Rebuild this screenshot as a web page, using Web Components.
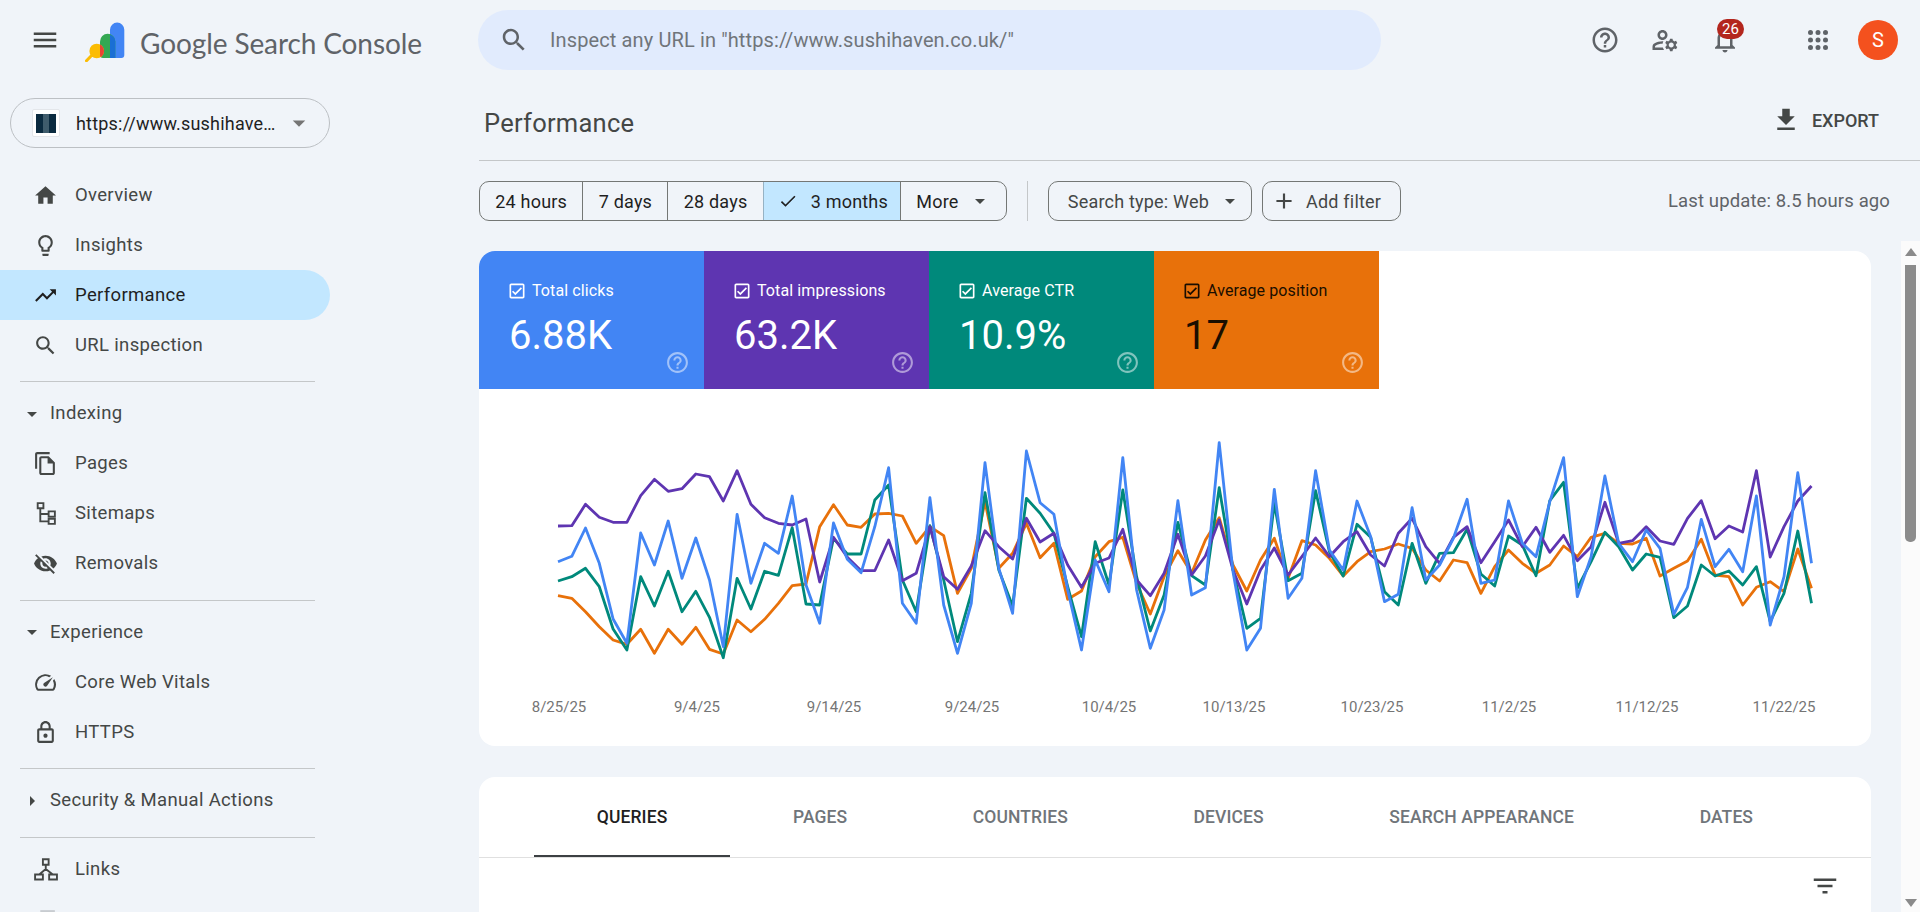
<!DOCTYPE html>
<html lang="en"><head><meta charset="utf-8"><title>Performance</title>
<style>
html,body{margin:0;padding:0;height:912px;overflow:hidden;background:#f0f4f9;font-family:Roboto,"Liberation Sans",sans-serif;}
</style></head>
<body>
<gsc-app></gsc-app>
<script>
const P={
menu:'M3 18h18v-2H3v2zm0-5h18v-2H3v2zm0-7v2h18V6H3z',
home:'M10 20v-6h4v6h5v-8h3L12 3 2 12h3v8z',
bulb:'M9 21c0 .55.45 1 1 1h4c.55 0 1-.45 1-1v-1H9v1zm3-19C8.14 2 5 5.14 5 9c0 2.38 1.19 4.47 3 5.74V17c0 .55.45 1 1 1h6c.55 0 1-.45 1-1v-2.26c1.81-1.27 3-3.36 3-5.74 0-3.86-3.14-7-7-7zm2.85 11.1l-.85.6V16h-4v-2.3l-.85-.6C7.8 12.16 7 10.63 7 9c0-2.76 2.24-5 5-5s5 2.24 5 5c0 1.63-.8 3.16-2.15 4.1z',
trend:'M16 6l2.29 2.29-4.88 4.88-4-4L2 16.59 3.41 18l6-6 4 4 6.3-6.29L22 12V6z',
search:'M15.5 14h-.79l-.28-.27C15.41 12.59 16 11.11 16 9.5 16 5.91 13.09 3 9.5 3S3 5.91 3 9.5 5.91 16 9.5 16c1.61 0 3.09-.59 4.23-1.57l.27.28v.79l5 4.99L20.49 19l-4.99-5zm-6 0C7.01 14 5 11.99 5 9.5S7.01 5 9.5 5 14 7.01 14 9.5 11.99 14 9.5 14z',
pages:'M16 1H4c-1.1 0-2 .9-2 2v14h2V3h12V1zm-1 4H8c-1.1 0-1.99.9-1.99 2L6 21c0 1.1.89 2 1.99 2H19c1.1 0 2-.9 2-2V11l-6-6zM8 21V7h6v5h5v9H8z',
eyeoff:'M12 7c2.76 0 5 2.24 5 5 0 .65-.13 1.26-.36 1.83l2.92 2.92c1.51-1.26 2.7-2.89 3.43-4.75-1.73-4.39-6-7.5-11-7.5-1.4 0-2.74.25-3.98.7l2.16 2.16C10.74 7.13 11.35 7 12 7zM2 4.27l2.28 2.28.46.46C3.08 8.3 1.78 10.02 1 12c1.73 4.39 6 7.5 11 7.5 1.55 0 3.03-.3 4.38-.84l.42.42L19.73 22 21 20.73 3.27 3 2 4.27zM7.53 9.8l1.55 1.55c-.05.21-.08.43-.08.65 0 1.66 1.34 3 3 3 .22 0 .44-.03.65-.08l1.55 1.55c-.67.33-1.41.53-2.2.53-2.76 0-5-2.24-5-5 0-.79.2-1.53.53-2.2zm4.31-.78l3.15 3.15.02-.16c0-1.66-1.34-3-3-3l-.17.01z',
speed:'M20.38 8.57l-1.23 1.85a8 8 0 0 1-.22 7.58H5.07A8 8 0 0 1 15.58 6.85l1.85-1.23A10 10 0 0 0 3.35 19a2 2 0 0 0 1.72 1h13.85a2 2 0 0 0 1.74-1 10 10 0 0 0-.27-10.44zm-9.79 6.84a2 2 0 0 0 2.83 0l5.66-8.49-8.49 5.66a2 2 0 0 0 0 2.83z',
lock:'M18 8h-1V6c0-2.76-2.24-5-5-5S7 3.24 7 6v2H6c-1.1 0-2 .9-2 2v10c0 1.1.9 2 2 2h12c1.1 0 2-.9 2-2V10c0-1.1-.9-2-2-2zM9 6c0-1.66 1.34-3 3-3s3 1.34 3 3v2H9V6zm9 14H6V10h12v10zm-6-3c1.1 0 2-.9 2-2s-.9-2-2-2-2 .9-2 2 .9 2 2 2z',
help:'M11 18h2v-2h-2v2zm1-16C6.48 2 2 6.48 2 12s4.48 10 10 10 10-4.48 10-10S17.52 2 12 2zm0 18c-4.41 0-8-3.59-8-8s3.59-8 8-8 8 3.59 8 8-3.59 8-8 8zm0-14c-2.21 0-4 1.79-4 4h2c0-1.1.9-2 2-2s2 .9 2 2c0 2-3 1.75-3 5h2c0-2.25 3-2.5 3-5 0-2.21-1.79-4-4-4z',
admin:'M4 18v-.65c0-.34.16-.66.41-.81C6.1 15.53 8.03 15 10 15c.03 0 .05 0 .08.01.1-.7.3-1.37.59-1.98-.22-.02-.44-.03-.67-.03-2.42 0-4.68.67-6.61 1.82-.88.52-1.39 1.5-1.39 2.53V20h9.26c-.42-.6-.75-1.28-.97-2H4zM10 12c2.21 0 4-1.79 4-4s-1.79-4-4-4-4 1.79-4 4 1.79 4 4 4zm0-6c1.1 0 2 .9 2 2s-.9 2-2 2-2-.9-2-2 .9-2 2-2zM20.75 16c0-.22-.03-.42-.06-.63l1.14-1.01-1-1.73-1.45.49c-.32-.27-.68-.48-1.08-.63L18 11h-2l-.3 1.49c-.4.15-.76.36-1.08.63l-1.45-.49-1 1.73 1.14 1.01c-.03.21-.06.41-.06.63s.03.42.06.63l-1.14 1.01 1 1.73 1.45-.49c.32.27.68.48 1.08.63L16 21h2l.3-1.49c.4-.15.76-.36 1.08-.63l1.45.49 1-1.73-1.14-1.01c.03-.21.06-.41.06-.63zM17 18c-1.1 0-2-.9-2-2s.9-2 2-2 2 .9 2 2-.9 2-2 2z',
bell:'M12 22c1.1 0 2-.9 2-2h-4c0 1.1.9 2 2 2zm6-6v-5c0-3.07-1.63-5.64-4.5-6.32V4c0-.83-.67-1.5-1.5-1.5s-1.5.67-1.5 1.5v.68C7.64 5.36 6 7.92 6 11v5l-2 2v1h16v-1l-2-2zm-2 1H8v-6c0-2.48 1.51-4.5 4-4.5s4 2.02 4 4.5v6z',
download:'M19 9h-4V3H9v6H5l7 7 7-7zM5 18v2h14v-2H5z',
check:'M9 16.17L4.83 12l-1.42 1.41L9 19 21 7l-1.41-1.41z',
drop:'M7 10l5 5 5-5z',
right:'M10 17l5-5-5-5z',
add:'M19 13h-6v6h-2v-6H5v-2h6V5h2v6h6v2z',
filter:'M10 18h4v-2h-4v2zM3 6v2h18V6H3zm3 7h12v-2H6v2z',
checkbox:'M19 3H5c-1.1 0-2 .9-2 2v14c0 1.1.9 2 2 2h14c1.1 0 2-.9 2-2V5c0-1.1-.9-2-2-2zm0 16H5V5h14v14zM17.99 9l-1.41-1.42-6.59 6.59-2.58-2.57-1.42 1.41 4 3.99z',
apps:'M6 4a2 2 0 1 0 0 4 2 2 0 0 0 0-4zm6 0a2 2 0 1 0 0 4 2 2 0 0 0 0-4zm6 0a2 2 0 1 0 0 4 2 2 0 0 0 0-4zM6 10a2 2 0 1 0 0 4 2 2 0 0 0 0-4zm6 0a2 2 0 1 0 0 4 2 2 0 0 0 0-4zm6 0a2 2 0 1 0 0 4 2 2 0 0 0 0-4zM6 16a2 2 0 1 0 0 4 2 2 0 0 0 0-4zm6 0a2 2 0 1 0 0 4 2 2 0 0 0 0-4zm6 0a2 2 0 1 0 0 4 2 2 0 0 0 0-4z',
trophy:'M7 3h14v8h-14z'
};
const STROKE={
sitemap:'M4.500 2h5.500v5h-5.500zM7 7v12.500h8M7 12.500h8M15 10h6v5h-6zM15 17h6v5h-6z',
links:'M9.500 2.200h5.500v5.200H9.500zM2 16.800h7.500v4.800H2zM15.500 16.800H23v4.800h-7.500zM12.250 7.400v4.100M12.250 11.500L6 16.800M12.250 11.500L19 16.800'
};
function def(name,css,html,extra){
  customElements.define(name,class extends HTMLElement{
    connectedCallback(){
      if(this.shadowRoot)return;
      const s=this.attachShadow({mode:'open'});
      s.innerHTML='<style>'+css+'</style>'+(typeof html==='function'?html(this):html);
      if(extra)extra(this,s);
    }
  });
}
def('gsc-icon',':host{display:inline-flex;flex:none;width:var(--s,30px);height:var(--s,30px);color:inherit}svg{width:100%;height:100%;display:block;fill:currentColor}.k{fill:none;stroke:currentColor;stroke-width:1.800}',
  h=>{const n=h.getAttribute('name');return `<svg viewBox="0 0 24 24" aria-hidden="true">${STROKE[n]?`<path class="k" d="${STROKE[n]}"/>`:`<path d="${P[n]}"/>`}</svg>`});

def('gsc-logo',':host{display:block;width:40px;height:40px;flex:none}svg{display:block}',
 `<svg width="40" height="40" viewBox="0 0 40 40">
  <defs><clipPath id="g"><path d="M15 19.500a7.600 7.600 0 0 1 15.300 0V36H18a3 3 0 0 1-3-3z"/></clipPath></defs>
  <path d="M25 7.700a7.150 7.150 0 0 1 14.300 0V33a3 3 0 0 1-3 3H25z" fill="#4285f4"/>
  <path d="M15 19.500a7.600 7.600 0 0 1 15.300 0V36H18a3 3 0 0 1-3-3z" fill="#34a853"/>
  <path d="M25 12.800a7.600 7.600 0 0 1 5.300 6.700V36H25z" fill="#1a6fd4"/>
  <path d="M6.300 33.700L1.500 38.800" stroke="#fbbc04" stroke-width="3" stroke-linecap="round"/>
  <circle cx="11.700" cy="29" r="7.300" fill="#fbbc04"/>
  <circle cx="11.700" cy="29" r="7.300" fill="#ea4335" clip-path="url(#g)"/>
 </svg>`);

def('gsc-topbar',`:host{display:flex;align-items:center;height:80px;box-sizing:border-box;color:#444746}
 .brand{display:flex;align-items:center;width:478px;flex:none;padding-left:30px;box-sizing:border-box}
 .name{font:400 28px/40px Lato,"Open Sans",sans-serif;color:#5f6368;margin:5px 0 0 15px;white-space:nowrap;letter-spacing:-.1px}
 gsc-logo{margin-left:25px;margin-top:4px}
 .search{flex:none;width:903px;height:60px;border-radius:30px;background:#e1ebfd;display:flex;align-items:center;padding-left:21px;box-sizing:border-box;color:#5f6368}
 .search span{margin-left:21px;font-size:20px;letter-spacing:.12px;color:#70757a;white-space:nowrap}
 .right{margin-left:auto;display:flex;align-items:center;padding-right:22px;color:#5f6368}
 .right gsc-icon{margin-left:30px}
 .bell{position:relative;margin-left:30px;width:30px;height:30px}
 .bell gsc-icon{margin:0}
 .badge{position:absolute;left:7px;top:-6px;width:27px;height:20px;border-radius:10px;background:#b3261e;color:#fff;font-size:15px;line-height:20px;text-align:center}
 .right gsc-icon.apps{margin-left:63px}
 .avatar{margin-left:25px;width:40px;height:40px;border-radius:50%;background:#f4511e;color:#fff;font-size:20px;line-height:40px;text-align:center}`,
 `<div class="brand"><gsc-icon name="menu"></gsc-icon><gsc-logo></gsc-logo><div class="name">Google Search Console</div></div>
  <div class="search"><gsc-icon name="search"></gsc-icon><span>Inspect any URL in "https://www.sushihaven.co.uk/"</span></div>
  <div class="right"><gsc-icon name="help"></gsc-icon><gsc-icon name="admin"></gsc-icon>
  <div class="bell"><gsc-icon name="bell"></gsc-icon><div class="badge">26</div></div>
  <gsc-icon class="apps" name="apps"></gsc-icon><div class="avatar">S</div></div>`);

def('gsc-property',`:host{display:flex;align-items:center;width:320px;height:50px;margin:18px 0 22px 10px;box-sizing:border-box;border:1px solid #bcc0c4;border-radius:25px;padding-left:21px;color:#1f1f1f}
 .fav{width:28px;height:28px;background:#fff;border:1px solid #e3e6ea;box-sizing:border-box;border-radius:2px;display:flex;align-items:center;justify-content:center;flex:none}
 .fav i{display:block;width:20px;height:19px;background:linear-gradient(90deg,#0b2b40 37%,#3f5c6c 37%,#3f5c6c 67%,#0b2b40 67%)}
 .t{margin-left:16px;font-size:18px;letter-spacing:.2px;white-space:nowrap}
 gsc-icon{--s:30px;margin-left:auto;margin-right:15px;color:#757575}`,
 `<div class="fav"><i></i></div><div class="t"><slot></slot></div><gsc-icon name="drop"></gsc-icon>`);

def('gsc-nav-item',`:host{display:flex;align-items:center;height:50px;width:330px;box-sizing:border-box;padding-left:32.500px;border-radius:0 25px 25px 0;color:#444746;font-size:18.500px;letter-spacing:.33px;white-space:nowrap}
 :host([active]){background:#c2e7ff;color:#1f1f1f}
 :host([faint]){color:#c8ccd0}
 gsc-icon{--s:25px;margin-right:17.500px}
 span{margin-bottom:1px}`,
 h=>`<gsc-icon name="${h.getAttribute('icon')}"></gsc-icon><span><slot></slot></span>`);

def('gsc-nav-section',`:host{display:flex;align-items:center;height:50px;box-sizing:border-box;padding-left:20px;color:#444746;font-size:18.500px;letter-spacing:.33px;white-space:nowrap}
 gsc-icon{--s:24px;margin-right:6px}
 span{margin-bottom:1px}`,
 h=>`<gsc-icon name="${h.hasAttribute('closed')?'right':'drop'}"></gsc-icon><span><slot></slot></span>`);

def('gsc-divider',':host{display:block;height:1px;background:#c4c7c9;margin:11px 164px 6.500px 20px}','');

def('gsc-sidebar',`:host{display:block;width:479px;flex:none;box-sizing:border-box;overflow:hidden}`,
 `<gsc-property>https://www.sushihave…</gsc-property>
  <gsc-nav-item icon="home">Overview</gsc-nav-item>
  <gsc-nav-item icon="bulb">Insights</gsc-nav-item>
  <gsc-nav-item icon="trend" active>Performance</gsc-nav-item>
  <gsc-nav-item icon="search">URL inspection</gsc-nav-item>
  <gsc-divider></gsc-divider>
  <gsc-nav-section>Indexing</gsc-nav-section>
  <gsc-nav-item icon="pages">Pages</gsc-nav-item>
  <gsc-nav-item icon="sitemap">Sitemaps</gsc-nav-item>
  <gsc-nav-item icon="eyeoff">Removals</gsc-nav-item>
  <gsc-divider></gsc-divider>
  <gsc-nav-section>Experience</gsc-nav-section>
  <gsc-nav-item icon="speed">Core Web Vitals</gsc-nav-item>
  <gsc-nav-item icon="lock">HTTPS</gsc-nav-item>
  <gsc-divider></gsc-divider>
  <gsc-nav-section closed>Security &amp; Manual Actions</gsc-nav-section>
  <gsc-divider></gsc-divider>
  <gsc-nav-item icon="links">Links</gsc-nav-item>
  <gsc-nav-item icon="trophy" faint></gsc-nav-item>`);

def('gsc-header',`:host{display:flex;align-items:center;height:81px;box-sizing:border-box;border-bottom:1px solid #c4c7c9;padding:4px 41px 0 5px;color:#444746}
 h1{margin:1px 0 0;font-weight:400;font-size:25.500px;color:#444746;letter-spacing:.25px}
 .exp{margin-left:auto;display:flex;align-items:center;font-size:18px;font-weight:500;margin-top:-4px;color:#444746}
 gsc-icon{margin-right:11px;margin-left:1px}`,
 `<h1><slot></slot></h1><div class="exp"><gsc-icon name="download"></gsc-icon>EXPORT</div>`);

def('gsc-range',`:host{display:flex;height:40px;box-sizing:border-box;border:1px solid #747775;border-radius:10px;overflow:hidden;color:#444746}`,`<slot></slot>`);
def('gsc-range-opt',`:host{display:flex;align-items:center;height:100%;padding:0 15.300px;font-size:18px;letter-spacing:.2px;border-left:1px solid #747775;white-space:nowrap;color:#1f1f1f;box-sizing:border-box}
 :host(:first-child){border-left:0}
 :host([sel]){background:#c2e7ff;padding:0 12px 0 14px;border-left-color:#96b2c4}
 gsc-icon{--s:20px;margin-right:13px}`,
 h=>(h.hasAttribute('sel')?'<gsc-icon name="check"></gsc-icon>':'')+'<slot></slot>'+(h.hasAttribute('menu')?'<gsc-icon name="drop" style="--s:24px;margin:0 -1px 0 9px;color:#444746"></gsc-icon>':''));
def('gsc-chip',`:host{display:flex;align-items:center;height:40px;box-sizing:border-box;border:1px solid #747775;border-radius:10px;padding:0 19px;font-size:18px;letter-spacing:.2px;color:#444746;white-space:nowrap}`,
 h=>(h.hasAttribute('add')?'<gsc-icon name="add" style="--s:26px;margin:0 9px 0 -11px"></gsc-icon>':'')+'<slot></slot>'+(h.hasAttribute('menu')?'<gsc-icon name="drop" style="--s:24px;margin:0 -10px 0 9px"></gsc-icon>':''));

def('gsc-toolbar',`:host{display:flex;align-items:center;height:80px;padding-right:30px;color:#5f6368}
 .sep{width:1px;height:40px;background:#c4c7c9;margin:0 20px}
 gsc-chip+gsc-chip{margin-left:10px}
 .upd{margin-left:auto;font-size:18.500px;letter-spacing:.12px;white-space:nowrap;color:#5f6368}`,
 `<gsc-range><gsc-range-opt>24 hours</gsc-range-opt><gsc-range-opt>7 days</gsc-range-opt><gsc-range-opt>28 days</gsc-range-opt><gsc-range-opt sel>3 months</gsc-range-opt><gsc-range-opt menu>More</gsc-range-opt></gsc-range>
  <div class="sep"></div><gsc-chip menu>Search type: Web</gsc-chip><gsc-chip add>Add filter</gsc-chip>
  <div class="upd">Last update: 8.5 hours ago</div>`);

def('gsc-metric',`:host{display:block;position:relative;width:225px;height:138px;box-sizing:border-box;padding:31px 0 0 30px;color:#fff;background:var(--c)}
 :host([dark]){color:#1a0e00}
 .l{display:flex;align-items:center;font-size:16px;letter-spacing:.1px;height:16px;white-space:nowrap}
 .l gsc-icon{--s:20px;margin:1px 5px 0 -2px}
 .v{font-size:40px;line-height:46px;margin-top:15px;white-space:nowrap}
 .h{position:absolute;right:14.500px;bottom:14.500px;--s:25px;color:#fff;opacity:.5}`,
 h=>`<div class="l"><gsc-icon name="checkbox"></gsc-icon><slot></slot></div><div class="v">${h.getAttribute('value')}</div><gsc-icon class="h" name="help"></gsc-icon>`);

const S={
purple:[288,287,223,262,277,277,197,148,184,176,132,140,213,122,223,263,280,285,267,456,322,382,422,422,330,452,430,290,440,478,408,302,350,387,265,336,310,405,472,400,384,298,450,497,430,313,435,378,270,420,522,420,354,435,380,324,380,335,305,375,408,310,265,350,400,322,290,398,335,270,350,292,367,316,392,350,217,340,332,290,333,343,265,212,326,288,306,122,381,290,213,168],
blue:[395,379,294,400,567,640,309,405,273,445,324,450,650,253,460,340,370,198,465,580,279,388,428,290,113,520,580,203,525,670,520,98,415,550,63,218,253,480,660,390,485,83,480,655,540,212,495,473,38,425,660,595,178,505,445,122,360,420,213,320,515,493,233,450,405,325,208,460,450,213,340,380,215,83,500,380,138,340,395,300,355,553,472,268,410,358,425,198,585,440,128,400],
green:[453,440,415,470,597,660,440,528,424,545,484,562,683,445,537,424,436,293,522,525,325,372,372,210,165,450,545,287,450,635,490,188,420,528,205,250,310,470,620,335,465,180,440,603,495,277,437,465,173,420,595,565,220,452,430,182,365,438,283,322,485,525,340,460,370,368,298,432,468,318,345,437,212,157,475,395,307,350,420,372,382,563,528,405,438,423,465,410,575,490,303,520],
orange:[497,505,545,590,630,643,598,670,598,643,592,658,672,570,605,568,520,467,462,290,224,285,292,252,250,258,340,290,317,490,415,215,415,370,280,383,340,508,483,380,335,322,460,552,440,362,430,330,263,405,483,390,325,445,332,345,385,438,395,365,357,342,355,420,453,390,398,490,410,360,400,430,405,348,380,322,310,340,342,325,438,415,393,328,435,440,525,472,455,485,357,475]
};
const ticks=[['8/25/25',559],['9/4/25',697],['9/14/25',834],['9/24/25',972],['10/4/25',1109],['10/13/25',1234],['10/23/25',1372],['11/2/25',1509],['11/12/25',1647],['11/22/25',1784]];
def('gsc-chart',`:host{display:block;height:357px}svg{display:block}text{font:15px Roboto,sans-serif;fill:#757575;text-anchor:middle}polyline{fill:none;stroke-width:2.800;stroke-linejoin:round}`,
 ()=>{
  const line=(a,c)=>`<polyline stroke="${c}" points="${a.map((v,i)=>(79+13.775*i).toFixed(1)+','+(41+v/3).toFixed(1)).join(' ')}"/>`;
  return `<svg width="1392" height="357" viewBox="0 0 1392 357">${line(S.orange,'#e8710a')}${line(S.green,'#00897b')}${line(S.purple,'#5e35b1')}${line(S.blue,'#4285f4')}${ticks.map(t=>`<text x="${t[1]-479}" y="323">${t[0]}</text>`).join('')}</svg>`;
 });

def('gsc-perf-card',`:host{display:block;background:#fff;border-radius:16px;overflow:hidden}
 .m{display:flex}`,
 `<div class="m"><gsc-metric style="--c:#4285f4" value="6.88K">Total clicks</gsc-metric><gsc-metric style="--c:#5e35b1" value="63.2K">Total impressions</gsc-metric><gsc-metric style="--c:#00897b" value="10.9%">Average CTR</gsc-metric><gsc-metric dark style="--c:#e8710a" value="17">Average position</gsc-metric></div><gsc-chart></gsc-chart>`);

def('gsc-tab',`:host{display:flex;align-items:center;height:80px;padding:2px 62.800px 0;box-sizing:border-box;font-size:17.500px;font-weight:500;color:#70757a;white-space:nowrap;border-bottom:2px solid transparent;letter-spacing:.1px}
 :host([sel]){color:#1f1f1f;border-bottom-color:#3c4043}`,`<slot></slot>`);
def('gsc-tabs-card',`:host{display:block;background:#fff;border-radius:16px 16px 0 0;margin-top:31px;height:300px}
 .t{display:flex;padding-left:55px;border-bottom:1px solid #e0e0e0}
 .f{display:flex;justify-content:flex-end;padding:13px 31px 0 0;color:#444746}`,
 `<div class="t"><gsc-tab sel>QUERIES</gsc-tab><gsc-tab>PAGES</gsc-tab><gsc-tab>COUNTRIES</gsc-tab><gsc-tab>DEVICES</gsc-tab><gsc-tab>SEARCH APPEARANCE</gsc-tab><gsc-tab>DATES</gsc-tab></div><div class="f"><gsc-icon name="filter"></gsc-icon></div>`);

def('gsc-scrollbar',`:host{display:flex;flex-direction:column;align-items:center;width:19px;flex:none;height:100%;background:#fbfbfb;box-sizing:border-box}
 .a{width:0;height:0;border-left:6px solid transparent;border-right:6px solid transparent}
 .u{border-bottom:8px solid #8a8a8a;margin-top:7px}
 .d{border-top:8px solid #8a8a8a;margin-top:auto;margin-bottom:5px}
 .th{width:11px;height:277px;background:#8b8b8b;border-radius:0 0 5px 5px;margin-top:9px}`,
 `<div class="a u"></div><div class="th"></div><div class="a d"></div>`);

def('gsc-main',`:host{display:flex;flex-direction:column;flex:1;min-width:0;height:100%;overflow:hidden}
 .row{display:flex;flex:1;min-height:0}
 .scroll{flex:1;min-width:0;overflow:hidden;padding:10px 30px 0 0}`,
 `<gsc-header>Performance</gsc-header><gsc-toolbar></gsc-toolbar>
  <div class="row"><div class="scroll"><gsc-perf-card></gsc-perf-card><gsc-tabs-card></gsc-tabs-card></div><gsc-scrollbar></gsc-scrollbar></div>`);

def('gsc-app',`:host{display:flex;flex-direction:column;width:1920px;height:912px;overflow:hidden;background:#f0f4f9}
 .b{display:flex;flex:1;min-height:0}`,
 `<gsc-topbar></gsc-topbar><div class="b"><gsc-sidebar></gsc-sidebar><gsc-main></gsc-main></div>`);
</script>
</body></html>
